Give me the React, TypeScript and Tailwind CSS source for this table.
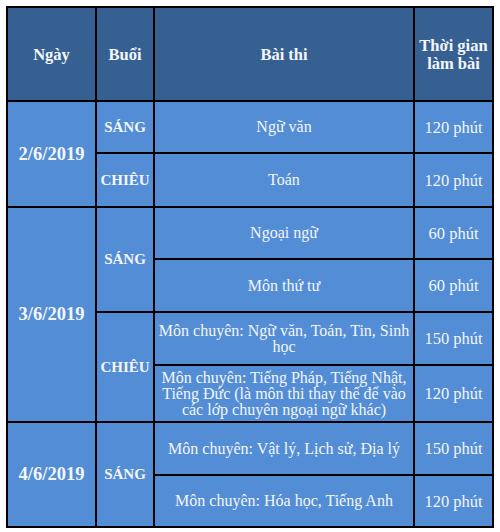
import React from "react";

const H = "bg-[#366092] flex items-center justify-center text-center font-bold";
const B = "bg-[#538dd5] flex items-center justify-center text-center";
const D = "bg-[#538dd5] flex items-center justify-center text-center font-bold text-[18.5px]";
const S = "bg-[#538dd5] flex items-center justify-center text-center font-bold text-[15px]";
const T = "bg-[#538dd5] flex flex-col items-center justify-center text-center text-[16px] leading-[16px] whitespace-nowrap";

export default function App() {
  return (
    <div className="w-[500px] h-[532px] bg-white pt-[6px] pl-[6px]" style={{ fontFamily: '"Liberation Serif", serif' }}>
      <div className="grid w-[488px] bg-black p-[2px] gap-[2px] text-[#f4f6fa] text-[16.5px] leading-[17px] grid-cols-[87px_56px_258px_77px] grid-rows-[92px_50px_52px_50px_51px_51px_55px_51px_50px]">
        <div className={H}>Ngày</div>
        <div className={H}>Buổi</div>
        <div className={H}>Bài thi</div>
        <div className={`${H} flex-col`}><span>Thời gian</span><span className="mt-[1px]">làm bài</span></div>

        <div className={`${D} row-span-2`}>2/6/2019</div>
        <div className={S}>SÁNG</div>
        <div className={T}>Ngữ văn</div>
        <div className={B}>120 phút</div>
        <div className={S}>CHIÊU</div>
        <div className={T}>Toán</div>
        <div className={B}>120 phút</div>

        <div className={`${D} row-span-4`}>3/6/2019</div>
        <div className={`${S} row-span-2`}>SÁNG</div>
        <div className={T}>Ngoại ngữ</div>
        <div className={B}>60 phút</div>
        <div className={T}>Môn thứ tư</div>
        <div className={B}>60 phút</div>
        <div className={`${S} row-span-2`}>CHIÊU</div>
        <div className={T}><span>Môn chuyên: Ngữ văn, Toán, Tin, Sinh</span><span>học</span></div>
        <div className={B}>150 phút</div>
        <div className={T}><span>Môn chuyên: Tiếng Pháp, Tiếng Nhật,</span><span>Tiếng Đức (là môn thi thay thế để vào</span><span>các lớp chuyên ngoại ngữ khác)</span></div>
        <div className={B}>120 phút</div>

        <div className={`${D} row-span-2`}>4/6/2019</div>
        <div className={`${S} row-span-2`}>SÁNG</div>
        <div className={T}>Môn chuyên: Vật lý, Lịch sử, Địa lý</div>
        <div className={B}>150 phút</div>
        <div className={T}>Môn chuyên: Hóa học, Tiếng Anh</div>
        <div className={B}>120 phút</div>
      </div>
    </div>
  );
}
